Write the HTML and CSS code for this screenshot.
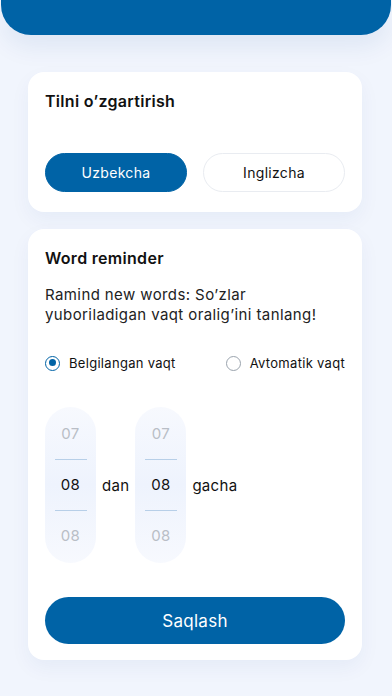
FILE: index.html
```html
<!DOCTYPE html>
<html lang="uz">
<head>
    <meta charset="UTF-8">
    <meta name="viewport" content="width=device-width, initial-scale=1.0">
    <title>Sozlamalar</title>
    <link rel="stylesheet" href="styles.css">
</head>
<body>

<div class="top-bar"></div>

<div class="card lang-card">
    <h2 class="card-title">Tilni o’zgartirish</h2>
    <div class="lang-buttons">
        <button class="lang-btn active">Uzbekcha</button>
        <button class="lang-btn">Inglizcha</button>
    </div>
</div>

<div class="card reminder-card">
    <h2 class="card-title">Word reminder</h2>
    <p class="reminder-text">Ramind new words: So’zlar yuboriladigan vaqt oralig’ini tanlang!</p>

    <div class="radio-row">
        <label class="radio checked"><span class="dot"></span>Belgilangan vaqt</label>
        <label class="radio"><span class="dot"></span>Avtomatik vaqt</label>
    </div>

    <div class="time-row">
        <div class="picker">
            <span class="faded">07</span>
            <span class="current">08</span>
            <span class="faded">08</span>
        </div>
        <span class="time-label">dan</span>
        <div class="picker">
            <span class="faded">07</span>
            <span class="current">08</span>
            <span class="faded">08</span>
        </div>
        <span class="time-label">gacha</span>
    </div>

    <button class="save-btn">Saqlash</button>
</div>

</body>
</html>
```

FILE: styles.css
```css
body {
    margin: 0;
    background: #f1f5fd;
    font-family: Inter, "Noto Sans", sans-serif;
    color: #111;
    width: 392px;
    height: 696px;
    overflow: hidden;
    letter-spacing: 0.3px;
}
.top-bar {
    height: 35px;
    margin: 0 1px;
    background: #0063a6;
    border-radius: 0 0 30px 30px;
    box-shadow: 0 12px 24px rgba(0, 60, 140, 0.08);
}
.card {
    background: #fff;
    margin: 0 30px 0 28px;
    border-radius: 16px;
    padding: 0 17px;
    box-shadow: 0 8px 20px rgba(0, 60, 140, 0.05);
}
.lang-card {
    margin-top: 37px;
    height: 140px;
    box-sizing: border-box;
    padding-top: 18px;
}
.card-title {
    margin: 0;
    font-size: 16px;
    font-weight: 600;
    line-height: 22px;
    color: #111;
}
.lang-buttons {
    display: flex;
    justify-content: space-between;
    margin-top: 41px;
}
.lang-btn {
    width: 142px;
    height: 39px;
    border-radius: 20px;
    border: 1px solid #e9ecf1;
    background: #fff;
    font-family: inherit;
    font-size: 14px;
    letter-spacing: 0.3px;
    color: #111;
}
.lang-btn.active {
    background: #0063a6;
    border-color: #0063a6;
    color: #fff;
}
.reminder-card {
    margin-top: 17px;
    height: 431px;
    box-sizing: border-box;
    padding-top: 18px;
}
.reminder-text {
    margin: 16px 0 0;
    max-width: 285px;
    font-size: 15px;
    line-height: 20px;
    letter-spacing: 0.4px;
    color: #222;
}
.radio-row {
    display: flex;
    justify-content: space-between;
    margin-top: 30px;
}
.radio {
    display: flex;
    align-items: center;
    font-size: 13px;
    color: #111;
}
.dot {
    width: 15px;
    height: 15px;
    border: 1px solid #9aa3ad;
    border-radius: 50%;
    margin-right: 9px;
    box-sizing: border-box;
    position: relative;
}
.radio.checked .dot {
    border: 1.5px solid #0063a6;
}
.radio.checked .dot::after {
    content: "";
    position: absolute;
    left: 2.5px;
    top: 2.5px;
    width: 7px;
    height: 7px;
    border-radius: 50%;
    background: #0063a6;
}
.time-row {
    display: flex;
    align-items: center;
    margin-top: 36px;
}
.picker {
    width: 51px;
    height: 156px;
    border-radius: 26px;
    background: linear-gradient(#f7f9fe, #eef3fd 50%, #f7f9fe);
    display: flex;
    flex-direction: column;
    align-items: center;
    justify-content: center;
}
.picker span {
    width: 32px;
    height: 50px;
    line-height: 50px;
    text-align: center;
    font-size: 15px;
}
.picker .faded {
    color: #b9bec6;
}
.picker .current {
    border-top: 1px solid #b7cfe8;
    border-bottom: 1px solid #b7cfe8;
    color: #111;
}
.time-label {
    font-size: 15px;
    margin: 0 6px;
}
.save-btn {
    display: block;
    width: 100%;
    height: 47px;
    margin-top: 34px;
    border: none;
    border-radius: 24px;
    background: #0063a6;
    color: #fff;
    font-family: inherit;
    font-size: 17px;
    letter-spacing: 0.3px;
}
```
